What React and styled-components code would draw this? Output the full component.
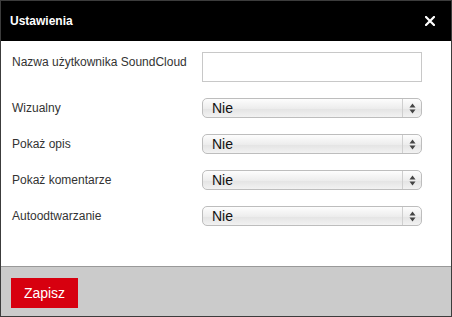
import React from "react";
import styled, { createGlobalStyle } from "styled-components";

const GlobalStyle = createGlobalStyle`
  html, body {
    margin: 0;
    padding: 0;
    background: #fff;
  }
  body {
    font-family: "Liberation Sans", Arial, Helvetica, sans-serif;
  }
`;

const FIELDS = [
  { id: "visual", label: "Wizualny" },
  { id: "description", label: "Pokaż opis" },
  { id: "comments", label: "Pokaż komentarze" },
  { id: "autoplay", label: "Autoodtwarzanie" },
];

export default function App() {
  return (
    <>
      <GlobalStyle />
      <Dialog>
        <Header>
          <Title>Ustawienia</Title>
          <CloseButton aria-label="Zamknij">
            <svg width="10" height="10" viewBox="0 0 10 10">
              <path d="M1 1L9 9M9 1L1 9" stroke="#fff" strokeWidth="2.2" strokeLinecap="square" />
            </svg>
          </CloseButton>
        </Header>
        <Body>
          <Row>
            <Label htmlFor="username">Nazwa użytkownika SoundCloud</Label>
            <TextInput id="username" type="text" />
          </Row>
          {FIELDS.map((field) => (
            <Row key={field.id}>
              <Label htmlFor={field.id}>{field.label}</Label>
              <SelectWrap>
                <Select id={field.id} defaultValue="no">
                  <option value="no">Nie</option>
                  <option value="yes">Tak</option>
                </Select>
                <Arrows>
                  <svg width="7" height="11" viewBox="0 0 7 11">
                    <path d="M3.5 0.5L6.5 4.5H0.5Z" fill="#444" />
                    <path d="M3.5 10.5L6.5 6.5H0.5Z" fill="#444" />
                  </svg>
                </Arrows>
              </SelectWrap>
            </Row>
          ))}
        </Body>
        <Footer>
          <SaveButton>Zapisz</SaveButton>
        </Footer>
      </Dialog>
    </>
  );
}

const Dialog = styled.div`
  box-sizing: border-box;
  width: 452px;
  height: 317px;
  border: 1px solid #3c3c3c;
  display: flex;
  flex-direction: column;
  background: #fff;
`;

const Header = styled.div`
  display: flex;
  align-items: center;
  justify-content: space-between;
  height: 40px;
  padding: 0 16px 0 9px;
  background: #000;
`;

const Title = styled.h1`
  margin: 0;
  font-size: 12px;
  font-weight: bold;
  color: #fff;
`;

const CloseButton = styled.button`
  display: flex;
  align-items: center;
  padding: 0;
  border: 0;
  background: none;
  cursor: pointer;
`;

const Body = styled.div`
  flex: 1;
  display: flex;
  flex-direction: column;
  gap: 16px;
  padding: 11px 0 0 11px;
`;

const Row = styled.div`
  display: grid;
  grid-template-columns: 190px 220px;
  align-items: start;
`;

const Label = styled.label`
  font-size: 12px;
  line-height: 20px;
  color: #333;
`;

const TextInput = styled.input`
  box-sizing: border-box;
  width: 220px;
  height: 30px;
  margin: 0;
  border: 1px solid #c8c8c8;
  background: #fff;
  outline: none;
`;

const SelectWrap = styled.div`
  position: relative;
  width: 220px;
  height: 20px;
`;

const Select = styled.select`
  box-sizing: border-box;
  appearance: none;
  width: 100%;
  height: 20px;
  margin: 0;
  padding: 0 0 0 9px;
  border: 1px solid #bdbdbd;
  border-radius: 5px;
  background: linear-gradient(#fdfdfd, #ececec 55%, #e4e4e4 56%, #f2f2f2);
  font-family: "Liberation Sans", Arial, sans-serif;
  font-size: 14px;
  line-height: 18px;
  color: #111;
  outline: none;
`;

const Arrows = styled.span`
  position: absolute;
  top: 1px;
  right: 1px;
  bottom: 1px;
  width: 18px;
  display: flex;
  align-items: center;
  justify-content: center;
  border-left: 1px solid #cfcfcf;
  pointer-events: none;
`;

const Footer = styled.div`
  height: 50px;
  box-sizing: border-box;
  padding: 11px 10px 0;
  border-top: 1px solid #999;
  background: #cbcbcb;
`;

const SaveButton = styled.button`
  width: 67px;
  height: 30px;
  border: 0;
  background: #d7000f;
  font-family: "Liberation Sans", Arial, sans-serif;
  font-size: 14px;
  color: #fff;
  cursor: pointer;
`;
